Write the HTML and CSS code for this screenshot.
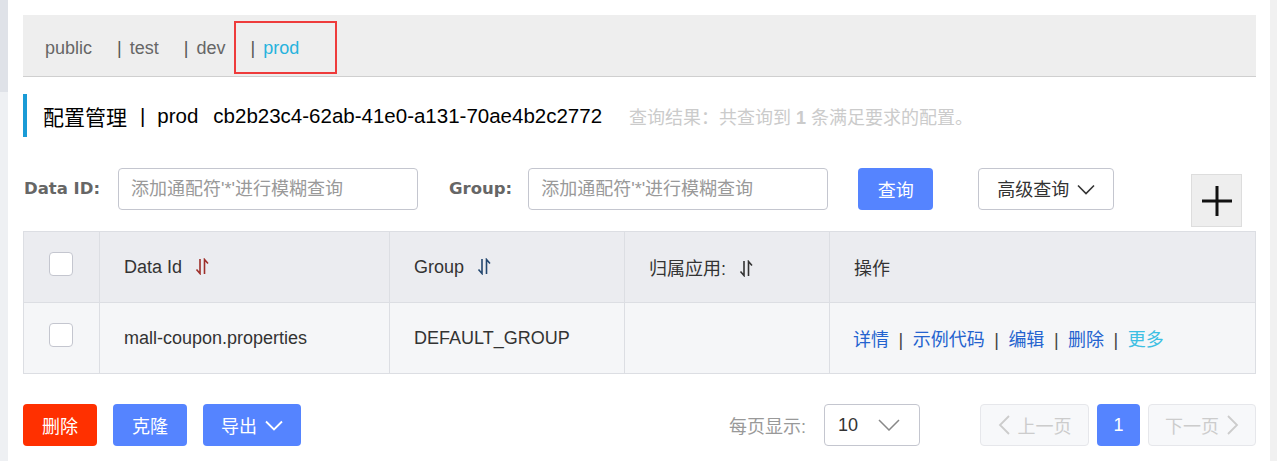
FILE: index.html
```html
<!DOCTYPE html>
<html lang="zh">
<head>
<meta charset="utf-8">
<title>配置管理</title>
<link rel="stylesheet" href="styles.css">
</head>
<body>
<div class="app">
  <div class="side-left"><div class="side-top"></div></div>
  <div class="main">
    <div class="tabbar">
      <span class="tab">public</span>
      <span class="tab"><span class="bar">|</span>test</span>
      <span class="tab"><span class="bar">|</span>dev</span>
      <span class="tab tab-active"><span class="bar">|</span>prod<span class="highlight"></span></span>
    </div>

    <div class="title-row">
      <span class="title title-cn">配置管理</span><span class="title title-sep">|</span><span class="title">prod</span><span class="title title-id">cb2b23c4-62ab-41e0-a131-70ae4b2c2772</span>
      <span class="result">查询结果：共查询到 <b>1</b> 条满足要求的配置。</span>
    </div>

    <div class="search-row">
      <label class="label label-id">Data ID:</label>
      <div class="input input-id">添加通配符'*'进行模糊查询</div>
      <label class="label label-group">Group:</label>
      <div class="input input-group">添加通配符'*'进行模糊查询</div>
      <button class="btn btn-primary btn-query">查询</button>
      <button class="btn btn-normal btn-adv">高级查询
        <svg class="chev" width="18" height="11" viewBox="0 0 18 11"><path d="M1 1.5 L9 9.5 L17 1.5" fill="none" stroke="#333" stroke-width="1.6"/></svg>
      </button>
      <div class="plus-box">
        <svg width="30" height="30" viewBox="0 0 30 30"><path d="M15 0 V30 M0 15 H30" stroke="#111" stroke-width="3"/></svg>
      </div>
    </div>

    <table class="grid">
      <colgroup>
        <col class="c1"><col class="c2"><col class="c3"><col class="c4"><col>
      </colgroup>
      <thead>
        <tr>
          <th class="cb-cell"><span class="checkbox"></span></th>
          <th>Data Id <svg class="sort sort-red" width="14" height="17" viewBox="0 0 14 17"><path d="M5 1 V15.5 L1.5 11.5 M9.5 16 V1.5 L13 5.5" fill="none" stroke="currentColor" stroke-width="1.6"/></svg></th>
          <th>Group <svg class="sort sort-blue" width="14" height="17" viewBox="0 0 14 17"><path d="M5 1 V15.5 L1.5 11.5 M9.5 16 V1.5 L13 5.5" fill="none" stroke="currentColor" stroke-width="1.6"/></svg></th>
          <th>归属应用: <svg class="sort sort-dark" width="14" height="17" viewBox="0 0 14 17"><path d="M5 1 V15.5 L1.5 11.5 M9.5 16 V1.5 L13 5.5" fill="none" stroke="currentColor" stroke-width="1.6"/></svg></th>
          <th>操作</th>
        </tr>
      </thead>
      <tbody>
        <tr>
          <td class="cb-cell"><span class="checkbox"></span></td>
          <td>mall-coupon.properties</td>
          <td>DEFAULT_GROUP</td>
          <td></td>
          <td class="ops"><a class="op">详情</a><span class="sep">|</span><a class="op">示例代码</a><span class="sep">|</span><a class="op">编辑</a><span class="sep">|</span><a class="op">删除</a><span class="sep">|</span><a class="op op-more">更多</a></td>
        </tr>
      </tbody>
    </table>

    <div class="footer">
      <div class="footer-left">
        <button class="btn btn-danger btn-w75">删除</button>
        <button class="btn btn-primary btn-w75">克隆</button>
        <button class="btn btn-primary btn-export">导出
          <svg class="chev" width="18" height="11" viewBox="0 0 18 11"><path d="M1 1.5 L9 9.5 L17 1.5" fill="none" stroke="#fff" stroke-width="1.8"/></svg>
        </button>
      </div>
      <div class="footer-right">
        <span class="page-label">每页显示:</span>
        <div class="select"><span>10</span>
          <svg width="22" height="12" viewBox="0 0 22 12"><path d="M1 1 L11 11 L21 1" fill="none" stroke="#888" stroke-width="1.5"/></svg>
        </div>
        <div class="pager">
          <button class="pg pg-disabled pg-prev"><svg width="12" height="20" viewBox="0 0 12 20"><path d="M11 1 L2 10 L11 19" fill="none" stroke="#ccc" stroke-width="1.8"/></svg>上一页</button>
          <button class="pg pg-current">1</button>
          <button class="pg pg-disabled pg-next">下一页<svg width="12" height="20" viewBox="0 0 12 20"><path d="M1 1 L10 10 L1 19" fill="none" stroke="#ccc" stroke-width="1.8"/></svg></button>
        </div>
      </div>
    </div>
  </div>
  <div class="side-right"></div>
</div>
</body>
</html>
```

FILE: styles.css
```css
* { box-sizing: border-box; }
html, body { margin: 0; padding: 0; background: #fff; }
body {
  font-family: "Liberation Sans", "Noto Sans CJK SC", sans-serif;
  font-size: 18px;
  color: #333;
}
.app { display: flex; width: 1277px; height: 461px; overflow: hidden; }
.side-left { width: 8px; background: #eef0f3; flex: none; }
.side-top { height: 92px; background: #dfe2e8; }
.side-right { width: 7px; background: #f1f1f1; flex: none; }
.main { flex: 1; padding: 15px 14px 0 15px; min-width: 0; }

.tabbar {
  height: 62px;
  background: #eeeeee;
  border-bottom: 1px solid #cfcfcf;
  display: flex;
  align-items: center;
  padding-left: 22px;
  padding-top: 6px;
}
.tab { color: #666; margin-right: 25px; white-space: pre; position: relative; }
.bar { margin-right: 8px; color: #555; }
.tab-active { color: #27b3dd; }
.highlight {
  position: absolute;
  left: -16px; top: -17px;
  width: 103px; height: 53px;
  border: 2px solid #ee3b3b;
}

.title-row {
  margin-top: 17px;
  height: 43px;
  border-left: 4px solid #1a9bd6;
  padding-left: 16px;
  display: flex;
  align-items: center;
}
.title { font-size: 20.5px; color: #000; white-space: pre; }
.title-cn { font-size: 21px; }
.title-sep { margin: 0 12px 0 13px; }
.title-id { margin-left: 15px; }
.result { margin-left: 27px; color: #cbcbcb; font-size: 18px; }
.result b { font-weight: 700; }

.search-row {
  margin-top: 31px;
  display: flex;
  align-items: flex-start;
  height: 59px;
}
.label {
  font-family: "DejaVu Sans", "Noto Sans CJK SC", sans-serif;
  font-size: 16.5px;
  font-weight: 700;
  color: #666;
  line-height: 42px;
}
.label-id { margin-left: 1px; }
.input {
  width: 300px; height: 42px;
  border: 1px solid #c4c6cf;
  border-radius: 4px;
  line-height: 40px;
  padding-left: 12px;
  color: #999;
  background: #fff;
}
.input-id { margin-left: 18px; }
.label-group { margin-left: 31px; }
.input-group { margin-left: 16px; }

.btn {
  height: 42px;
  border-radius: 4px;
  font-family: inherit;
  font-size: 18px;
  border: none;
  padding: 0;
  display: inline-flex;
  align-items: center;
  justify-content: center;
  gap: 8px;
  color: #fff;
}
.btn-primary { background: #5584ff; }
.btn-danger { background: #ff3000; }
.btn-normal { background: #fff; border: 1px solid #c4c6cf; color: #333; }
.btn-query { margin-left: 30px; width: 75px; }
.btn-adv { margin-left: 45px; width: 136px; padding-bottom: 2px; }
.btn-adv .chev { margin-top: 2px; }
.plus-box {
  margin-left: auto;
  margin-right: 14px;
  margin-top: 6px;
  width: 51px; height: 53px;
  background: #eeeeee;
  border: 1px solid #dddddd;
  display: flex; align-items: center; justify-content: center;
}

.grid {
  margin-top: 4px;
  width: 100%;
  border-collapse: collapse;
  table-layout: fixed;
}
.grid col.c1 { width: 76px; }
.grid col.c2 { width: 290px; }
.grid col.c3 { width: 235px; }
.grid col.c4 { width: 205px; }
.grid th, .grid td {
  border: 1px solid #dcdee3;
  height: 71px;
  padding: 0 0 0 24px;
  text-align: left;
  font-weight: 400;
  color: #333;
  white-space: nowrap;
}
.grid th { background: #ebecf0; }
.grid td { background: #f5f6f8; }
.grid .cb-cell { padding: 0 0 0 25px; }
.checkbox {
  display: block;
  width: 24px; height: 24px;
  background: #fff;
  border: 1px solid #c4c6cf;
  border-radius: 4px;
  margin-top: -6px;
}
.sort { vertical-align: -2px; margin-left: 8px; }
.sort-red { color: #9e2f2a; }
.sort-blue { color: #23476f; }
.sort-dark { color: #333; }
.ops { color: #333; padding-left: 23px !important; }
.op { color: #2463cf; }
.op-more { color: #3dbfe3; }
.sep { margin: 0 9.5px; color: #444; }

.footer {
  margin-top: 30px;
  display: flex;
  align-items: center;
}
.footer-left { display: flex; gap: 16px; }
.btn-w75 { width: 74px; }
.btn-export { width: 98px; }
.footer-right { margin-left: auto; display: flex; align-items: center; }
.page-label { color: #999; }
.select {
  margin-left: 18px;
  width: 96px; height: 42px;
  border: 1px solid #c4c6cf;
  border-radius: 4px;
  display: flex; align-items: center; justify-content: space-between;
  padding: 0 19px 0 13px;
  color: #333;
}
.pager { margin-left: 60px; display: flex; gap: 8px; }
.pg {
  height: 42px;
  border-radius: 4px;
  font-family: inherit;
  font-size: 18px;
  display: inline-flex; align-items: center; justify-content: center;
  gap: 8px;
  padding: 0;
}
.pg-disabled { background: #f7f8fa; border: 1px solid #e6e7eb; color: #cccccc; }
.pg-prev { width: 109px; }
.pg-next { width: 108px; }
.pg-current { width: 43px; background: #5584ff; border: none; color: #fff; }
```
